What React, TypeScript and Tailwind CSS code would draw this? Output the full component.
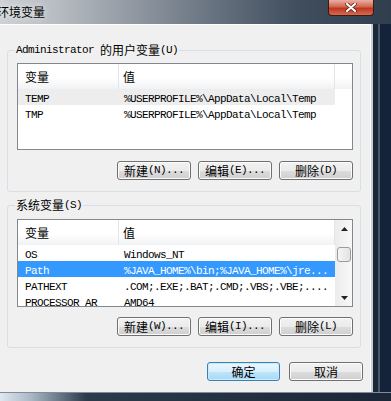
import React from "react";

const CJK = /([\u3400-\u9fff]+)/;

function Txt({ s }: { s: string }) {
  const parts = s.split(CJK).filter((p) => p !== "");
  return (
    <>
      {parts.map((p, i) =>
        CJK.test(p) ? (
          <span key={i} className="font-['Noto_Sans_CJK_SC',sans-serif] text-[12px] tracking-normal">
            {p}
          </span>
        ) : (
          <span key={i} className="font-['Liberation_Mono',monospace] text-[11px] tracking-[-0.6px] whitespace-pre">
            {p}
          </span>
        )
      )}
    </>
  );
}

function Btn({ label, primary }: { label: string; primary?: boolean }) {
  return (
    <div
      className={
        primary
          ? "h-[19px] w-[73px] rounded-[3px] border border-[#3c7fb1] bg-[linear-gradient(to_bottom,#eaf6fd_0%,#d9f0fc_50%,#bee6fd_50%,#a7d9f5_100%)] shadow-[inset_0_0_0_1px_#c9ebfc] flex items-center justify-center leading-none text-black"
          : "h-[19px] w-[74px] rounded-[3px] border border-[#707070] bg-[linear-gradient(to_bottom,#f2f2f2_0%,#ebebeb_50%,#dddddd_50%,#cfcfcf_100%)] shadow-[inset_0_0_0_1px_#fcfcfc] flex items-center justify-center leading-none text-black"
      }
    >
      <Txt s={label} />
    </div>
  );
}

type Row = { name: string; value: string; state?: "sel" | "soft" };

function ListView({ rows, height, scroll }: { rows: Row[]; height: string; scroll?: boolean }) {
  return (
    <div className={`ml-[9px] w-[336px] ${height} border border-[#828790] bg-white flex overflow-hidden`}>
      <div className="flex-1 flex flex-col">
        <div className="h-[25px] flex shrink-0 bg-[linear-gradient(to_bottom,#ffffff_0%,#ffffff_55%,#f1f2f4_100%)]">
          <div className="w-[101px] border-r border-[#e3e5e8] pl-[7px] flex items-center">
            <Txt s="变量" />
          </div>
          <div className="w-[216px] border-r border-[#e3e5e8] pl-[4px] flex items-center">
            <Txt s="值" />
          </div>
        </div>
        {rows.map((r) => (
          <div
            key={r.name}
            className={
              r.state === "sel"
                ? "h-[16px] w-[317px] shrink-0 flex items-center bg-[#3399ff] text-white"
                : r.state === "soft"
                ? "h-[16px] w-[317px] shrink-0 flex items-center bg-[#ededed] text-black"
                : "h-[16px] w-[317px] shrink-0 flex items-center text-black"
            }
          >
            <div className="w-[101px] pl-[7px] leading-[16px] whitespace-nowrap overflow-hidden">
              <Txt s={r.name} />
            </div>
            <div className="flex-1 pl-[5px] leading-[16px] whitespace-nowrap overflow-hidden">
              <Txt s={r.value} />
            </div>
          </div>
        ))}
      </div>
      {scroll && (
        <div className="w-[17px] shrink-0 flex flex-col bg-[linear-gradient(to_right,#ececec,#f8f8f8)] border-l border-[#ececec]">
          <div className="h-[17px] flex items-center justify-center">
            <svg width="7" height="4" viewBox="0 0 7 4">
              <path d="M3.5 0 L7 4 L0 4 Z" fill="#222" />
            </svg>
          </div>
          <div className="mt-[10px] ml-[1px] w-[14px] h-[15px] rounded-[3px] border border-[#9b9b9b] bg-[linear-gradient(to_right,#f5f5f5,#e3e3e3)]" />
          <div className="flex-1" />
          <div className="h-[17px] flex items-center justify-center">
            <svg width="7" height="4" viewBox="0 0 7 4">
              <path d="M0 0 L7 0 L3.5 4 Z" fill="#222" />
            </svg>
          </div>
        </div>
      )}
    </div>
  );
}

function GroupLabel({ s }: { s: string }) {
  return (
    <div className="-mt-[8px] ml-[7px] w-fit px-[1px] h-[14px] bg-[#f0f0f0] flex items-center text-black leading-none">
      <Txt s={s} />
    </div>
  );
}

export default function App() {
  return (
    <div className="w-[391px] h-[401px] overflow-hidden flex flex-col bg-[#1b2838]">
      {/* title bar */}
      <div className="h-[24px] shrink-0 flex bg-[linear-gradient(to_right,#cdd1d5_0%,#b8bdc3_14%,#959ca5_32%,#66727f_55%,#414e5e_76%,#313e4e_100%)]">
        <div className="flex-1 flex items-center overflow-hidden">
          <span className="-ml-[3px] font-['Noto_Sans_CJK_SC',sans-serif] text-[12px] text-black [text-shadow:0_0_6px_#ffffff]">
            环境变量
          </span>
        </div>
        <div className="w-[46px] h-[16px] mr-[17px] rounded-b-[4px] border border-t-0 border-[#3a1a14] bg-[linear-gradient(to_bottom,#e8b0a4_0%,#d2654f_45%,#bf3620_55%,#d66a50_100%)] flex items-center justify-center">
          <svg width="12" height="9" viewBox="0 0 12 9">
            <path d="M2 1 L10 8 M10 1 L2 8" stroke="#5a1c12" strokeWidth="3.6" strokeLinecap="round" />
            <path d="M2 1 L10 8 M10 1 L2 8" stroke="#ffffff" strokeWidth="2.2" strokeLinecap="round" />
          </svg>
        </div>
      </div>

      <div className="h-[368px] shrink-0 flex">
        {/* client area */}
        <div className="w-[371px] bg-[#f0f0f0] border-t border-r border-white flex flex-col">
          <div className="mt-[25px] ml-[7px] w-[354px] border border-[#d5dfe5] rounded-[3px] pb-[11px]">
            <GroupLabel s="Administrator 的用户变量(U)" />
            <div className="mt-[6px]">
              <ListView
                height="h-[87px]"
                rows={[
                  { name: "TEMP", value: "%USERPROFILE%\\AppData\\Local\\Temp", state: "soft" },
                  { name: "TMP", value: "%USERPROFILE%\\AppData\\Local\\Temp" },
                ]}
              />
            </div>
            <div className="mt-[11px] flex justify-end gap-[7px] pr-[7px]">
              <Btn label="新建(N)..." />
              <Btn label="编辑(E)..." />
              <Btn label="删除(D)" />
            </div>
          </div>

          <div className="mt-[13px] ml-[7px] w-[354px] border border-[#d5dfe5] rounded-[3px] pb-[11px]">
            <GroupLabel s="系统变量(S)" />
            <div className="mt-[7px]">
              <ListView
                height="h-[88px]"
                scroll
                rows={[
                  { name: "OS", value: "Windows_NT" },
                  { name: "Path", value: "%JAVA_HOME%\\bin;%JAVA_HOME%\\jre...", state: "sel" },
                  { name: "PATHEXT", value: ".COM;.EXE;.BAT;.CMD;.VBS;.VBE;...." },
                  { name: "PROCESSOR_AR", value: "AMD64" },
                ]}
              />
            </div>
            <div className="mt-[10px] flex justify-end gap-[7px] pr-[7px]">
              <Btn label="新建(W)..." />
              <Btn label="编辑(I)..." />
              <Btn label="删除(L)" />
            </div>
          </div>

          <div className="mt-[14px] flex justify-end gap-[9px] pr-[7px]">
            <Btn label="确定" primary />
            <Btn label="取消" />
          </div>
        </div>
        {/* right frame */}
        <div className="flex-1 bg-[linear-gradient(to_right,#c5d0da_0px,#c5d0da_2px,#1a2838_2px,#1a2838_7px,#4a596a_7px,#4a596a_9px,#14223a_9px)]" />
      </div>

      {/* bottom frame */}
      <div className="flex-1 border-t border-[#7f8c9a] bg-[linear-gradient(to_right,#dfe7ef_0%,#a9b7c5_8%,#2c3a4a_22%,#1b2636_100%)]" />
    </div>
  );
}
